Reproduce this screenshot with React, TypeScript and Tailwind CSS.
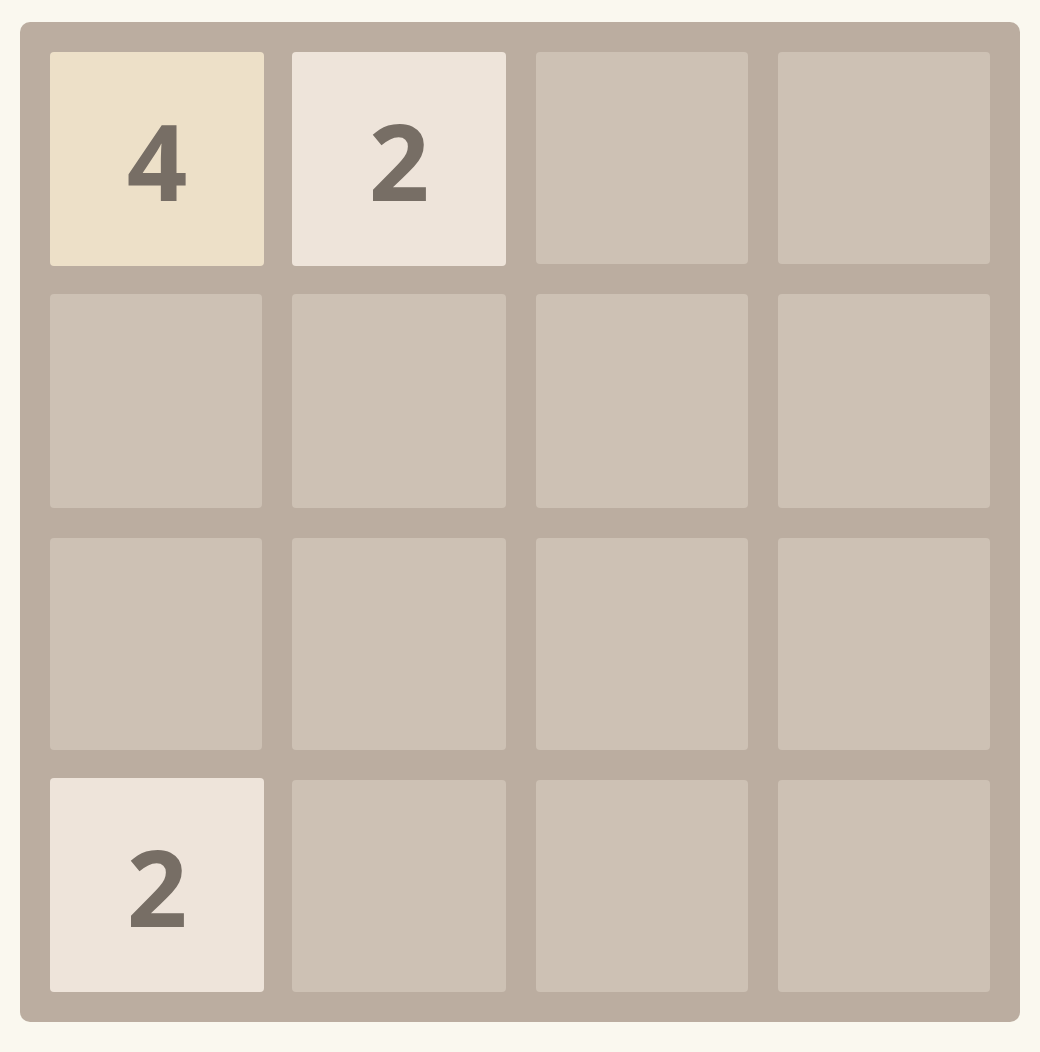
import React from "react";

// 4x4 board state, 0 = empty cell
const board: number[][] = [
  [4, 2, 0, 0],
  [0, 0, 0, 0],
  [0, 0, 0, 0],
  [2, 0, 0, 0],
];

const tileColors: Record<number, string> = {
  2: "bg-[#eee4da]",
  4: "bg-[#ede0c8]",
};

function Tile({ value, lift }: { value: number; lift?: boolean }) {
  if (!value) {
    return <div className="h-full w-full rounded-[4px] bg-[#cdc1b4]" />;
  }
  return (
    <div
      className={`flex h-[214px] w-[214px] items-center justify-center rounded-[4px] pt-[2px] text-[106px] font-bold leading-none text-[#776e65] ${tileColors[value]} ${lift ? "-mt-[2px]" : ""}`}
      style={{ fontFamily: '"Open Sans", "DejaVu Sans", sans-serif' }}
    >
      {value}
    </div>
  );
}

export default function App() {
  return (
    <div className="min-h-[1052px] w-[1040px] bg-[#faf8ef] px-[20px] pt-[22px]">
      <div className="grid w-[1000px] grid-cols-[212px_214px_212px_212px] grid-rows-[212px_214px_212px_212px] gap-[30px] rounded-[10px] bg-[#bbada0] p-[30px]">
        {board.flat().map((v, i) => (
          <Tile key={i} value={v} lift={i >= 12} />
        ))}
      </div>
    </div>
  );
}
